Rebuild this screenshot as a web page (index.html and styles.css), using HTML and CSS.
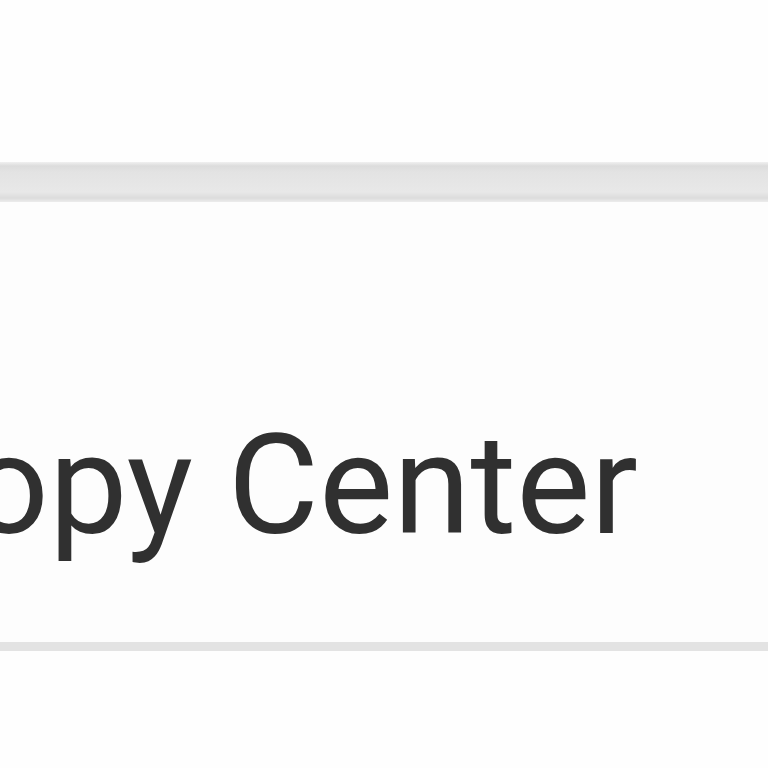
FILE: index.html
```html
<!DOCTYPE html>
<html>
<head>
<meta charset="utf-8">
<link rel="stylesheet" href="styles.css">
</head>
<body>
<div class="page">
  <div class="top"></div>
  <div class="bar"></div>
  <div class="panel">
    <div class="title">Copy Center</div>
  </div>
</div>
</body>
</html>
```
FILE: styles.css
```css
html, body {
  margin: 0;
  padding: 0;
  background: #fefefe;
}
.page {
  width: 768px;
  height: 768px;
  overflow: hidden;
}
.top {
  height: 162px;
  background: #fefefe;
}
.bar {
  height: 40px;
  background: linear-gradient(to bottom, #f0f0f0 0, #dcdcdc 4px, #e3e3e3 10px, #e8e8e8 30px, #dcdcdc 36px, #ececec 40px);
}
.panel {
  height: 440px;
  background: #fdfdfd;
  border-bottom: 9px solid #e3e3e3;
  overflow: hidden;
}
.title {
  font-family: Roboto, "Liberation Sans", sans-serif;
  font-weight: 400;
  font-size: 140px;
  line-height: 140px;
  color: #303030;
  white-space: nowrap;
  margin-left: -122px;
  padding-top: 213px;
}
```
